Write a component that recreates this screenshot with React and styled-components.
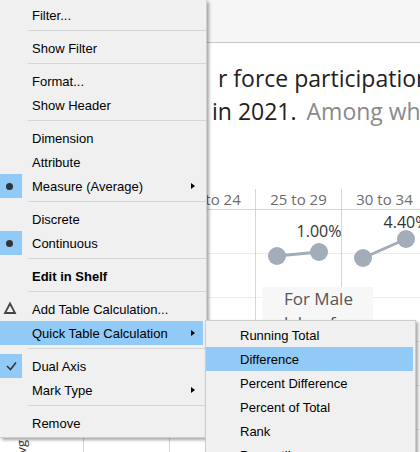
import React from 'react';
import styled, { createGlobalStyle } from 'styled-components';

const GlobalStyle = createGlobalStyle`
  html, body {
    margin: 0;
    padding: 0;
    width: 420px;
    height: 452px;
    overflow: hidden;
    background: #fff;
  }
`;

const Page = styled.div`
  position: relative;
  width: 420px;
  height: 452px;
  overflow: hidden;
  background: #fff;
  font-family: 'Open Sans', Lato, sans-serif;
`;

const TopBar = styled.div`
  height: 42px;
  background: #f6f6f6;
  border-bottom: 1px solid #c6c6c6;
`;

const Title = styled.div`
  padding-top: 19px;
  font-size: 23px;
  line-height: 33px;
  color: #222;
  white-space: nowrap;
`;

const TitleLine = styled.div`
  display: flex;
`;

const Lead = styled.span`
  flex: none;
  width: ${(p) => p.$width}px;
  text-align: right;
  overflow: hidden;
`;

const Rest = styled.span`
  margin-left: ${(p) => p.$gap || 0}px;
`;

const Muted = styled.span`
  margin-left: 10px;
  color: #8a8a8a;
`;

const Chart = styled.div`
  margin-top: 61px;
  display: grid;
  grid-template-columns: 83px repeat(4, 86px);
  grid-template-rows: 21px 243px;
`;

const HeadCell = styled.div`
  height: 20px;
  line-height: 20px;
  border-bottom: 1px solid #d6d6d6;
  border-left: ${(p) => (p.$first ? 'none' : '1px solid #d6d6d6')};
  font-size: 15px;
  color: #6b6b6b;
  text-align: center;
  white-space: nowrap;
`;

const BodyCell = styled.div`
  position: relative;
  border-left: ${(p) => (p.$first ? 'none' : '1px solid #d6d6d6')};
  background: repeating-linear-gradient(
    to bottom,
    transparent 0 43px,
    #ececec 43px 44px
  );
  padding: ${(p) => (p.$first ? '230px 0 0 12px' : '0')};
`;

const RowLabel = styled.span`
  display: inline-block;
  writing-mode: vertical-rl;
  transform: rotate(180deg);
  white-space: nowrap;
  font-size: 13px;
  color: #333;
`;

const Plot = styled.svg`
  display: block;
  overflow: visible;
`;

const Tip = styled.div`
  position: absolute;
  left: 262px;
  top: 287px;
  width: 111px;
  height: 48px;
  padding-left: 22px;
  box-sizing: border-box;
  background: #f7f7f7;
  font-size: 17px;
  line-height: 24px;
  color: #555;
`;

const Menu = styled.div`
  position: absolute;
  left: 0;
  top: 0;
  width: 206px;
  padding: 3px 0 2px;
  background: #f0f0f0;
  border-right: 1px solid #cfcfcf;
  border-bottom: 1px solid #cfcfcf;
  box-shadow: 2px 2px 3px rgba(0, 0, 0, 0.35);
  font-family: 'Liberation Sans', Arial, sans-serif;
  font-size: 13px;
  color: #000;
`;

const SubMenu = styled(Menu)`
  left: 205px;
  top: 320px;
  width: 209px;
  padding: 2px 0;
  border: 1px solid #cccccc;
`;

const Item = styled.div`
  display: flex;
  align-items: center;
  height: 24px;
  margin-right: ${(p) => (p.$sub ? '2px' : '3px')};
  background: ${(p) => (p.$active ? '#91c9f7' : 'transparent')};
  font-weight: ${(p) => (p.$bold ? 700 : 400)};
  white-space: nowrap;
`;

const Gutter = styled.span`
  flex: none;
  display: flex;
  align-items: center;
  justify-content: center;
  width: 22px;
  height: 24px;
  margin-right: ${(p) => (p.$sub ? '12px' : '10px')};
  background: ${(p) => (p.$on ? '#91c9f7' : 'transparent')};
`;

const Label = styled.span`
  flex: 1;
`;

const Bullet = styled.span`
  width: 7px;
  height: 7px;
  margin-right: 3px;
  border-radius: 50%;
  background: #333;
`;

const Arrow = styled.span`
  width: 0;
  height: 0;
  margin-right: 8px;
  border-left: 4px solid #000;
  border-top: 3.5px solid transparent;
  border-bottom: 3.5px solid transparent;
`;

const Separator = styled.div`
  height: 1px;
  margin: 3px 0 5px 28px;
  background: #d5d5d5;
`;

const Delta = () => (
  <svg width="22" height="24" viewBox="0 0 22 24">
    <polygon points="10,6.5 15,16 5,16" fill="none" stroke="#444" strokeWidth="1.8" strokeLinejoin="miter" />
  </svg>
);

const Check = () => (
  <svg width="22" height="24" viewBox="0 0 22 24">
    <polyline points="7,12 10.5,15.5 16,8.5" fill="none" stroke="#333" strokeWidth="1.5" />
  </svg>
);

const MenuItem = ({ label, mark, active, bold, arrow }) => (
  <Item $active={active} $bold={bold}>
    <Gutter $on={mark === 'bullet' || mark === 'check'}>
      {mark === 'bullet' && <Bullet />}
      {mark === 'check' && <Check />}
      {mark === 'delta' && <Delta />}
    </Gutter>
    <Label>{label}</Label>
    {arrow && <Arrow />}
  </Item>
);

const menu = [
  { label: 'Filter...' },
  'sep',
  { label: 'Show Filter' },
  'sep',
  { label: 'Format...' },
  { label: 'Show Header' },
  'sep',
  { label: 'Dimension' },
  { label: 'Attribute' },
  { label: 'Measure (Average)', mark: 'bullet', arrow: true },
  'sep',
  { label: 'Discrete' },
  { label: 'Continuous', mark: 'bullet' },
  'sep',
  { label: 'Edit in Shelf', bold: true },
  'sep',
  { label: 'Add Table Calculation...', mark: 'delta' },
  { label: 'Quick Table Calculation', active: true, arrow: true },
  'sep',
  { label: 'Dual Axis', mark: 'check' },
  { label: 'Mark Type', arrow: true },
  'sep',
  { label: 'Remove' },
];

const quick = ['Running Total', 'Difference', 'Percent Difference', 'Percent of Total', 'Rank', 'Percentile'];

const columns = [
  { head: '15 to 19' },
  { head: '20 to 24' },
  { head: '25 to 29', a: [21, 46], b: [63, 42], value: '1.00%', labelY: 27 },
  { head: '30 to 34', a: [21, 48], b: [64, 29], value: '4.40%', labelY: 18 },
];

const Pair = ({ a, b, value, labelY }) => (
  <Plot width="85" height="80">
    <line x1={a[0]} y1={a[1]} x2={b[0]} y2={b[1]} stroke="#a3acb9" strokeWidth="3" />
    <circle cx={a[0]} cy={a[1]} r="9" fill="#a3acb9" />
    <circle cx={b[0]} cy={b[1]} r="9" fill="#a3acb9" />
    <text x={b[0]} y={labelY} textAnchor="middle" fontSize="16" fill="#333" fontFamily="'Open Sans', sans-serif">
      {value}
    </text>
  </Plot>
);

export default function App() {
  return (
    <Page>
      <GlobalStyle />
      <TopBar />
      <Title>
        <TitleLine>
          <Lead $width={206}>Female labo</Lead>
          <Rest $gap={12}>r force participation rate</Rest>
        </TitleLine>
        <TitleLine>
          <Lead $width={212}>Women&nbsp;</Lead>
          <Rest>
            in 2021.<Muted>Among which</Muted>
          </Rest>
        </TitleLine>
      </Title>

      <Chart>
        <HeadCell $first />
        {columns.map((c) => (
          <HeadCell key={c.head}>{c.head}</HeadCell>
        ))}
        <BodyCell $first>
          <RowLabel>Avg</RowLabel>
        </BodyCell>
        {columns.map((c) => (
          <BodyCell key={c.head}>{c.value && <Pair {...c} />}</BodyCell>
        ))}
      </Chart>

      <Tip>
        For Male
        <br />
        labor force
      </Tip>

      <Menu>
        {menu.map((m, i) => (m === 'sep' ? <Separator key={i} /> : <MenuItem key={i} {...m} />))}
      </Menu>

      <SubMenu>
        {quick.map((q) => (
          <Item key={q} $sub $active={q === 'Difference'}>
            <Gutter $sub />
            <Label>{q}</Label>
          </Item>
        ))}
      </SubMenu>
    </Page>
  );
}
